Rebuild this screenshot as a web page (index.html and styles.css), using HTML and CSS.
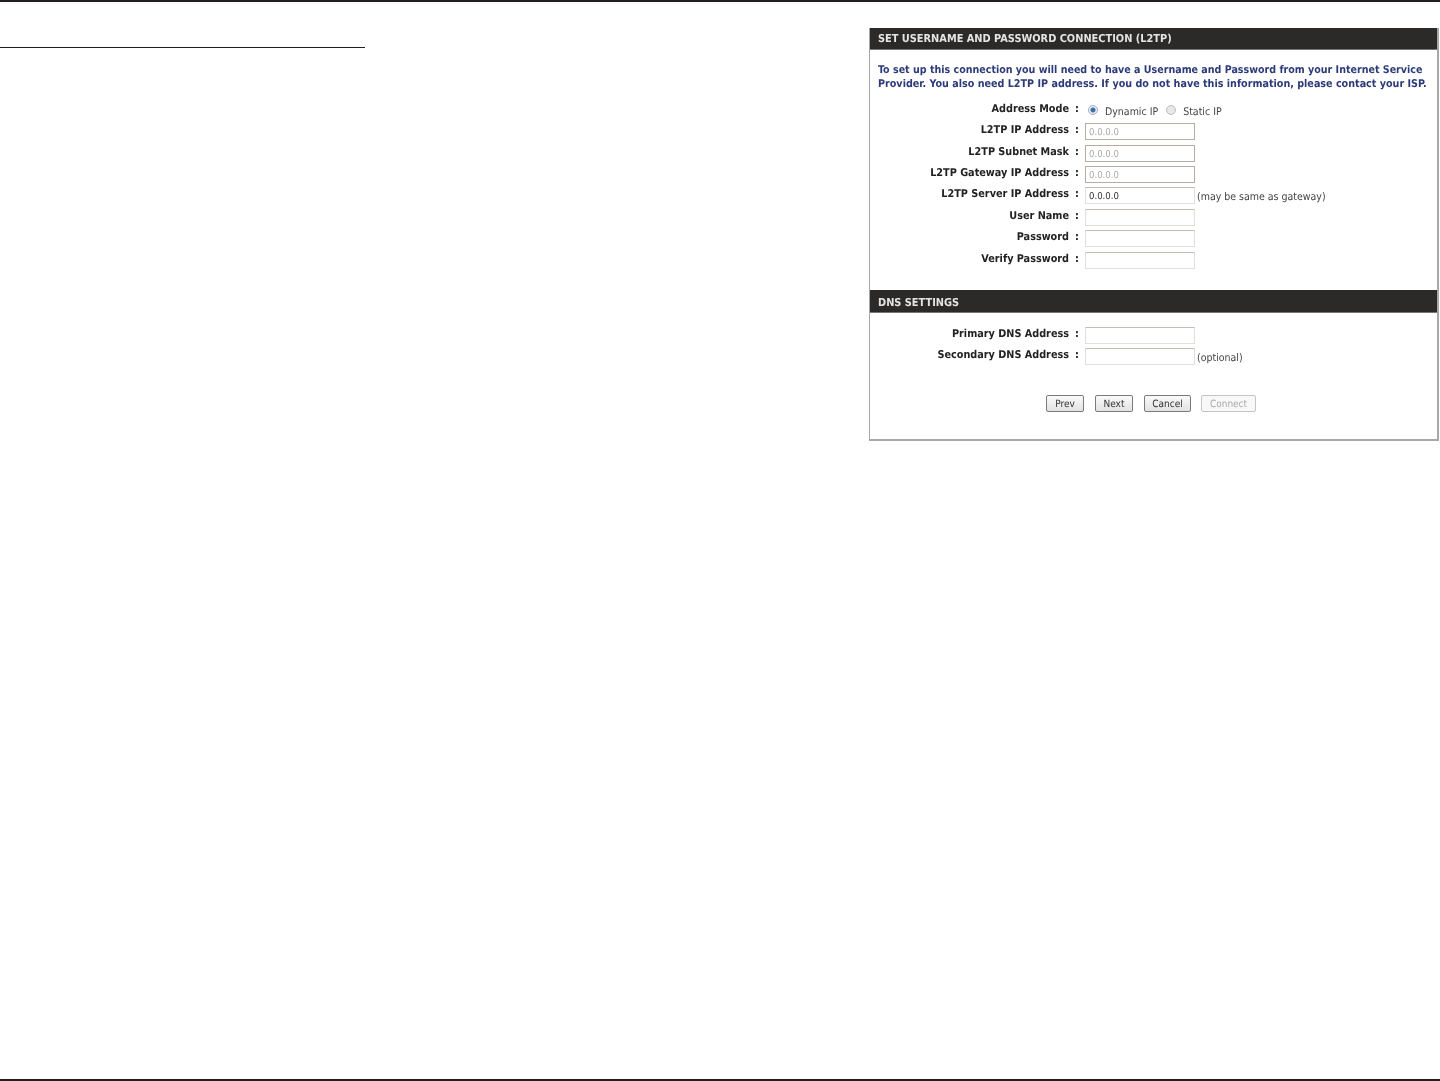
FILE: index.html
```html
<!DOCTYPE html>
<html lang="en">
<head>
<meta charset="utf-8">
<title>L2TP connection setup</title>
<link rel="stylesheet" href="styles.css">
</head>
<body>
<div class="page">
  <div class="content">
    <div class="left"><div class="short-rule"></div></div>
    <section class="panel">
      <h2 class="bar">SET USERNAME AND PASSWORD CONNECTION (L2TP)</h2>
      <p class="intro">To set up this connection you will need to have a Username and Password from your Internet Service<br><span class="intro-second">Provider. You also need L2TP IP address. If you do not have this information, please contact your ISP.</span></p>
      <div class="form">
        <label class="lbl">Address Mode</label><span class="colon">:</span>
        <div class="field radios">
          <span class="radio on"></span><span class="note">Dynamic IP</span>
          <span class="radio"></span><span class="note">Static IP</span>
        </div>
        <label class="lbl">L2TP IP Address</label><span class="colon">:</span>
        <div class="field"><span class="input off">0.0.0.0</span></div>
        <label class="lbl">L2TP Subnet Mask</label><span class="colon">:</span>
        <div class="field"><span class="input off">0.0.0.0</span></div>
        <label class="lbl">L2TP Gateway IP Address</label><span class="colon">:</span>
        <div class="field"><span class="input off">0.0.0.0</span></div>
        <label class="lbl">L2TP Server IP Address</label><span class="colon">:</span>
        <div class="field"><span class="input">0.0.0.0</span><span class="note hint">(may be same as gateway)</span></div>
        <label class="lbl">User Name</label><span class="colon">:</span>
        <div class="field"><span class="input"></span></div>
        <label class="lbl">Password</label><span class="colon">:</span>
        <div class="field"><span class="input"></span></div>
        <label class="lbl">Verify Password</label><span class="colon">:</span>
        <div class="field"><span class="input"></span></div>
      </div>
      <h2 class="bar dns">DNS SETTINGS</h2>
      <div class="form form-dns">
        <label class="lbl">Primary DNS Address</label><span class="colon">:</span>
        <div class="field"><span class="input"></span></div>
        <label class="lbl">Secondary DNS Address</label><span class="colon">:</span>
        <div class="field"><span class="input"></span><span class="note hint">(optional)</span></div>
      </div>
      <div class="buttons">
        <span class="btn w-prev">Prev</span>
        <span class="btn w-next">Next</span>
        <span class="btn w-cancel">Cancel</span>
        <span class="btn w-connect disabled">Connect</span>
      </div>
    </section>
  </div>
  <div class="bottom-rule"></div>
</div>
</body>
</html>
```
FILE: styles.css
```css
* { box-sizing: border-box; }
html, body { margin: 0; padding: 0; background: #fff; }
.page {
  height: 1081px;
  display: flex;
  flex-direction: column;
  border-top: 2px solid #231f20;
  overflow: hidden;
}
.content {
  display: flex;
  justify-content: space-between;
  align-items: flex-start;
  padding: 26px 1px 0 0;
}
.left { width: 365px; padding-top: 19px; }
.short-rule { height: 1px; background: #231f20; }
.panel {
  width: 570px;
  height: 413px;
  border: 1px solid #a8a8a8;
  border-width: 0 2px 2px 1px;
  font-family: "DejaVu Sans Condensed", "DejaVu Sans", sans-serif;
  font-stretch: condensed;
  font-size: 10.77px;
  color: #222;
  text-rendering: geometricPrecision;
  filter: blur(0.4px);
}
.bar {
  margin: 0;
  height: 22px;
  padding-left: 8px;
  background: #2b2a29;
  border-bottom: 1px solid #777;
  color: #e4e4e4;
  font-size: 10.9px;
  font-weight: 700;
  line-height: 21px;
  white-space: nowrap;
}
.bar.dns { height: 23px; line-height: 25px; margin-top: 19.4px; }
.intro {
  margin: 13px 0 0;
  padding-left: 8px;
  color: #2c3a78;
  font-weight: 700;
  font-size: 10.6px;
  line-height: 14px;
  white-space: nowrap;
}
.intro-second { font-size: 10.68px; }
.form {
  display: grid;
  grid-template-columns: 199px 16px 1fr;
  grid-auto-rows: 21.4px;
  margin-top: 8.6px;
  align-items: center;
}
.form-dns { margin-top: 11.6px; }
.lbl { text-align: right; font-weight: 700; white-space: nowrap; position: relative; top: -2px; }
.colon { text-align: center; font-weight: 700; position: relative; top: -2px; }
.field { display: flex; align-items: center; height: 100%; }
.input {
  display: block;
  width: 110px;
  height: 17px;
  border: 1px solid #e2dfda;
  border-top-color: #c4bcb4;
  padding-left: 3px;
  font-size: 9.5px;
  line-height: 17px;
  color: #333;
  background: #fff;
  flex: none;
}
.input.off { color: #aaa; border-color: #b5aea6; }
.note { font-size: 10.5px; color: #444; }
.hint { margin-left: 2px; margin-top: 2px; }
.radios { padding-left: 3px; }
.radios .note { margin-top: 3px; }
.radio {
  width: 10px;
  height: 10px;
  border-radius: 50%;
  border: 1px solid #bbb;
  background: #e8e8e8;
  margin-right: 7px;
  flex: none;
}
.radio + .note { margin-right: 8px; }
.radio.on { background: radial-gradient(circle, #3a6ea8 0 2px, #e8eef4 3px); border-color: #aab; }
.buttons {
  display: flex;
  margin: 27.4px 0 0 176px;
  gap: 11px;
}
.btn {
  display: block;
  height: 17px;
  border: 1px solid #7a7a7a;
  border-radius: 2px;
  background: linear-gradient(#fafafa, #e2e2e2);
  font-size: 10px;
  line-height: 17px;
  text-align: center;
  color: #333;
}
.w-prev { width: 38px; }
.w-next { width: 38px; }
.w-cancel { width: 47px; }
.w-connect { width: 55px; margin-left: -1px; }
.disabled { color: #aaa; border-color: #c4c4c4; background: #f8f8f8; }
.bottom-rule { margin-top: auto; height: 2px; background: #231f20; flex: none; }
```
